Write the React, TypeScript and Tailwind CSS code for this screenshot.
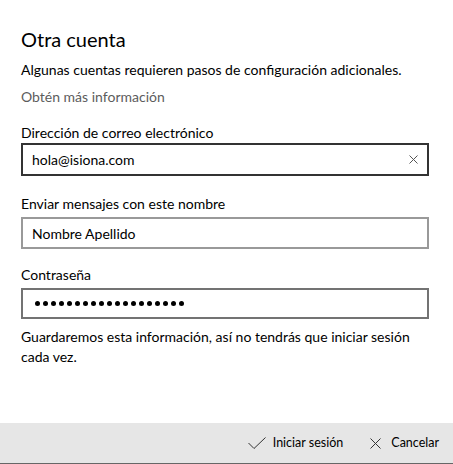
import React from 'react';

const font = { fontFamily: 'Lato, "Liberation Sans", sans-serif' };

const Dots: React.FC<{ count: number }> = ({ count }) => (
  <div className="flex gap-[3px]">
    {Array.from({ length: count }).map((_, i) => (
      <span key={i} className="block w-[5px] h-[5px] rounded-full bg-black" />
    ))}
  </div>
);

export default function App() {
  return (
    <div className="w-[453px] h-[464px] bg-white flex flex-col text-black" style={font}>
      <div className="flex-1 pl-[21px]">
        <div className="w-[410px]">
          <h1 className="mt-[26px] text-[20px] leading-[26px]">Otra cuenta</h1>
          <p className="mt-[8px] text-[14px] leading-[20px]">
            Algunas cuentas requieren pasos de configuración adicionales.
          </p>
          <p className="mt-[7px] text-[14px] leading-[20px] text-[#5c5c5c]">Obtén más información</p>

          <label className="block mt-[16px] text-[14px] leading-[20px]">Dirección de correo electrónico</label>
          <div className="h-[33px] w-[408px] border-2 border-[#333] flex items-center pl-[9px] pr-[9px]">
            <span className="flex-1 text-[14px]">hola@isiona.com</span>
            <svg width="9" height="9" viewBox="0 0 9 9">
              <path d="M0.5 0.5L8.5 8.5M8.5 0.5L0.5 8.5" stroke="#555" strokeWidth="1" />
            </svg>
          </div>

          <label className="block mt-[18px] text-[14px] leading-[20px]">Enviar mensajes con este nombre</label>
          <div className="mt-[3px] h-[32px] w-[408px] border-2 border-[#999] flex items-center pl-[9px]">
            <span className="text-[14px]">Nombre Apellido</span>
          </div>

          <label className="block mt-[16px] text-[14px] leading-[20px]">Contraseña</label>
          <div className="mt-[3px] h-[31px] w-[408px] border-2 border-[#737373] flex items-center pl-[12px]">
            <Dots count={19} />
          </div>

          <p className="mt-[8px] text-[14px] leading-[20px]">
            Guardaremos esta información, así no tendrás que iniciar sesión cada vez.
          </p>
        </div>
      </div>

      <div className="h-[40px] bg-[#e6e6e6] flex items-center justify-end pr-[14px] text-[12.5px]">
        <button className="flex items-center gap-[7px]">
          <svg width="18" height="12" viewBox="0 0 18 12">
            <path d="M0.5 6L6 11.5L17.5 0.5" fill="none" stroke="#333" strokeWidth="1" />
          </svg>
          <span>Iniciar sesión</span>
        </button>
        <button className="ml-[27px] flex items-center gap-[10px]">
          <svg width="11" height="11" viewBox="0 0 11 11">
            <path d="M0.5 0.5L10.5 10.5M10.5 0.5L0.5 10.5" stroke="#333" strokeWidth="1" />
          </svg>
          <span>Cancelar</span>
        </button>
      </div>
      <div className="h-[1px] bg-[#666]" />
    </div>
  );
}
